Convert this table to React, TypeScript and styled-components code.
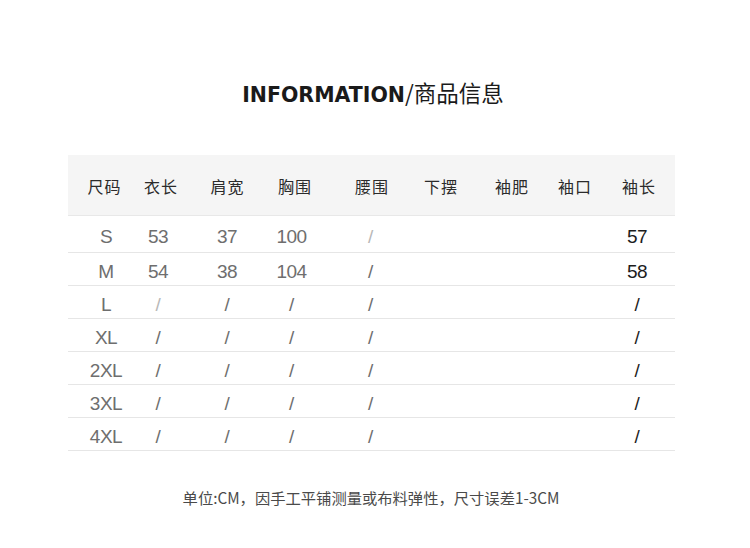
import React from "react";
import styled, { createGlobalStyle } from "styled-components";

const Global = createGlobalStyle`
  html, body { margin: 0; padding: 0; background: #ffffff; }
  body { font-family: "Liberation Sans", "Noto Sans CJK SC", sans-serif; }
`;

const Page = styled.div`
  width: 750px;
  height: 548px;
  display: flex;
  flex-direction: column;
  align-items: flex-start;
  box-sizing: border-box;
  padding-top: 77px;
  background: #fff;
`;

const Title = styled.h1`
  align-self: center;
  margin: 0 0 0 -4px;
  height: 30px;
  line-height: 30px;
  font-size: 22px;
  color: #1a1a1a;
  font-weight: normal;
  display: flex;
  align-items: baseline;
`;

const TitleEn = styled.span`
  font-family: "DejaVu Sans", sans-serif;
  font-size: 20.5px;
  font-weight: bold;
`;

const TitleCn = styled.span`
  font-family: "Noto Sans CJK SC", sans-serif;
  font-size: 22.5px;
  font-weight: 400;
`;

const Table = styled.div`
  margin: 48px 0 0 68px;
  width: 607px;
  display: flex;
  flex-direction: column;
`;

const cols = "65px 60px 67px 72px 73px 72px 67px 63px 68px";

const HeadRow = styled.div`
  display: grid;
  grid-template-columns: ${cols};
  height: 60px;
  background: #f5f5f5;
  border-bottom: 1px solid #e8e8e8;
  align-items: center;
`;

const HeadCell = styled.div<{ $shift: number }>`
  text-align: center;
  font-family: "Noto Sans CJK SC", sans-serif;
  font-size: 16px;
  color: #2b2b2b;
  letter-spacing: 1px;
  padding-top: 2px;
  transform: translateX(${(p) => p.$shift}px);
`;

const Row = styled.div<{ $tall?: boolean }>`
  display: grid;
  grid-template-columns: ${cols};
  height: ${(p) => (p.$tall ? 36 : 32)}px;
  border-bottom: 1px solid #e6e6e6;
  align-items: center;
`;

const Cell = styled.div<{ $dark?: boolean; $light?: boolean; $shift?: number }>`
  text-align: center;
  font-size: 19px;
  letter-spacing: -0.5px;
  padding-top: 5px;
  color: ${(p) => (p.$dark ? "#1c1c1c" : p.$light ? "#b8b8b8" : "#6e6e6e")};
  transform: translateX(${(p) => p.$shift ?? 0}px);
`;

const Footer = styled.div`
  align-self: center;
  margin: 35px 0 0 -8px;
  font-family: "Noto Sans CJK SC", sans-serif;
  font-size: 15.3px;
  color: #4a4a4a;
`;

const headers = ["尺码", "衣长", "肩宽", "胸围", "腰围", "下摆", "袖肥", "袖口", "袖长"];
const headShifts = [4, -2, 1, -1, 3.5, 0, 1.5, -0.5, -2];

type RowData = { size: string; vals: string[]; last: string; lightIdx?: number[] };

const rows: RowData[] = [
  { size: "S", vals: ["53", "37", "100", "/"], last: "57", lightIdx: [3] },
  { size: "M", vals: ["54", "38", "104", "/"], last: "58" },
  { size: "L", vals: ["/", "/", "/", "/"], last: "/", lightIdx: [0] },
  { size: "XL", vals: ["/", "/", "/", "/"], last: "/" },
  { size: "2XL", vals: ["/", "/", "/", "/"], last: "/" },
  { size: "3XL", vals: ["/", "/", "/", "/"], last: "/" },
  { size: "4XL", vals: ["/", "/", "/", "/"], last: "/" },
];

const shifts = [-5, 0.5, -4.5, 2];

export default function App() {
  return (
    <>
      <Global />
      <Page>
        <Title>
          <TitleEn>INFORMATION</TitleEn>
          <TitleCn>/商品信息</TitleCn>
        </Title>
        <Table>
          <HeadRow>
            {headers.map((h, i) => (
              <HeadCell key={h} $shift={headShifts[i]}>
                {h}
              </HeadCell>
            ))}
          </HeadRow>
          {rows.map((r, i) => (
            <Row key={r.size} $tall={i === 0}>
              <Cell $shift={5.5}>{r.size}</Cell>
              {r.vals.map((v, j) => (
                <Cell key={j} $shift={shifts[j]} $light={r.lightIdx?.includes(j)}>
                  {v}
                </Cell>
              ))}
              <Cell />
              <Cell />
              <Cell />
              <Cell $dark $shift={-4}>
                {r.last}
              </Cell>
            </Row>
          ))}
        </Table>
        <Footer>单位:CM，因手工平铺测量或布料弹性，尺寸误差1-3CM</Footer>
      </Page>
    </>
  );
}
